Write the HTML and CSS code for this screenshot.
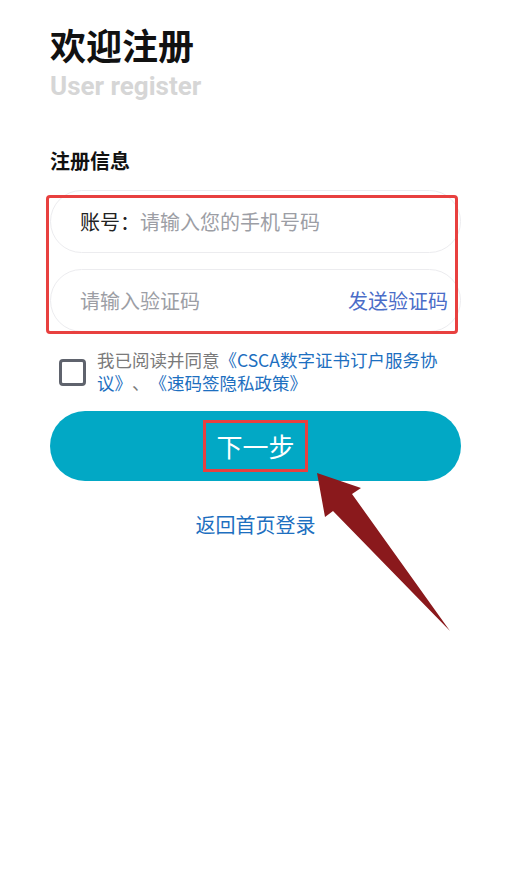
FILE: index.html
```html
<!doctype html>
<html>
  <head>
    <title>欢迎注册</title>
    <meta charset="utf-8">
    <meta name="viewport" content="width=device-width, initial-scale=1">
    <link rel="stylesheet" href="styles.css">
  </head>

  <body>
    <div class="page">
      <h1 class="title">欢迎注册</h1>
      <div class="subtitle">User register</div>

      <h2 class="section">注册信息</h2>
      <div class="fields">
        <div class="pill">
          <label for="phone">账号：</label>
          <input id="phone" type="text" placeholder="请输入您的手机号码">
        </div>
        <div class="pill">
          <input id="code" type="text" placeholder="请输入验证码">
          <a class="send" href="#">发送验证码</a>
        </div>
        <div class="mark mark-fields"></div>
      </div>

      <div class="agree">
        <span class="checkbox"></span>
        <p>我已阅读并同意<a href="#">《CSCA数字证书订户服务协议》</a>、<a href="#">《速码签隐私政策》</a></p>
      </div>

      <button class="next"><span class="next-label">下一步</span></button>

      <a class="back" href="#">返回首页登录</a>

      <svg class="arrow" width="509" height="890" viewBox="0 0 509 890">
        <polygon points="317,473 361,488 352,494 450,631 333,511 325,517" fill="#8a191c"/>
      </svg>
    </div>
  </body>
</html>
```

FILE: styles.css
```css
body {
  margin: 0;
  background: #fff;
  font-family: "Noto Sans CJK SC", "Noto Sans", sans-serif;
  text-spacing-trim: space-all;
}
.page {
  position: relative;
  padding: 23px 48px 0 50px;
  height: 867px;
}
.title {
  margin: 0;
  font-size: 36px;
  line-height: 43px;
  font-weight: 700;
  color: #111;
}
.subtitle {
  margin-top: 5px;
  font-family: Roboto, "Noto Sans", sans-serif;
  font-size: 26px;
  line-height: 30px;
  font-weight: 700;
  color: #d6d6d6;
}
.section {
  margin: 46px 0 0;
  font-size: 20px;
  line-height: 28px;
  font-weight: 700;
  color: #111;
}
.fields {
  position: relative;
  margin-top: 15px;
  display: flex;
  flex-direction: column;
  gap: 16px;
}
.pill {
  display: flex;
  align-items: center;
  height: 63px;
  box-sizing: border-box;
  padding: 0 12px 0 29px;
  border: 1px solid #ececef;
  border-radius: 32px;
}
.pill label {
  font-size: 20px;
  color: #222;
  white-space: nowrap;
}
.pill input {
  flex: 1;
  min-width: 0;
  border: none;
  outline: none;
  padding: 0;
  font-family: inherit;
  font-size: 20px;
  color: #222;
  background: transparent;
}
.pill input::placeholder {
  color: #9c9ea5;
}
.send {
  font-size: 20px;
  color: #4b6dc8;
  text-decoration: none;
  white-space: nowrap;
}
.mark {
  position: absolute;
  border: 3px solid #e8403f;
  border-radius: 4px;
  box-sizing: border-box;
}
.mark-fields {
  left: -4px;
  top: 5px;
  width: 412px;
  height: 139px;
}
.agree {
  display: flex;
  align-items: flex-start;
  gap: 11px;
  margin-top: 16px;
  padding-left: 9px;
}
.checkbox {
  flex: none;
  width: 27px;
  height: 27px;
  margin-top: 11px;
  box-sizing: border-box;
  border: 3px solid #5f636d;
  border-radius: 4px;
}
.agree p {
  margin: 0;
  font-size: 17.5px;
  line-height: 23px;
  color: #7a7a7a;
}
.agree a {
  color: #1d6fc0;
  text-decoration: none;
}
.next {
  display: flex;
  align-items: center;
  justify-content: center;
  width: 100%;
  height: 70px;
  margin-top: 17px;
  border: none;
  border-radius: 35px;
  background: #02a8c5;
  font-family: inherit;
  cursor: pointer;
}
.next-label {
  padding: 0 10px;
  border: 3px solid #e8403f;
  font-size: 26px;
  line-height: 46px;
  color: #fff;
}
.back {
  display: block;
  margin-top: 30px;
  text-align: center;
  font-size: 20px;
  line-height: 28px;
  color: #1d6fc0;
  text-decoration: none;
}
.arrow {
  position: absolute;
  left: 0;
  top: 0;
  pointer-events: none;
}
```
